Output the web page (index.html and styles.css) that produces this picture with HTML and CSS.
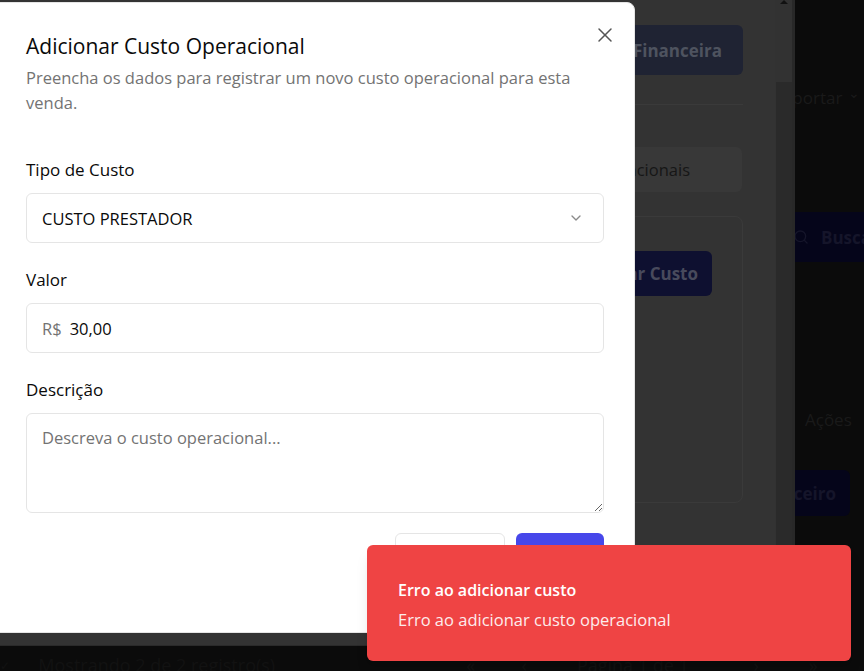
FILE: index.html
```html
<!DOCTYPE html>
<html lang="pt-BR">
<head>
<meta charset="utf-8">
<title>Adicionar Custo Operacional</title>
<link rel="stylesheet" href="styles.css">
</head>
<body>
  <!-- underlying page (behind both overlays) -->
  <div class="page">
    <div class="page-right">
      <div class="pr-export"><span>Exportar</span><span class="pr-chev">&#8964;</span></div>
      <div class="pr-search">
        <svg class="pr-ico" width="16" height="16" viewBox="0 0 24 24" fill="none" stroke="currentColor" stroke-width="2" stroke-linecap="round" stroke-linejoin="round"><circle cx="11" cy="11" r="8"/><path d="m21 21-4.3-4.3"/></svg>
        <span>Buscar</span>
      </div>
      <div class="pr-actions">Ações</div>
      <div class="pr-btn">Financeiro</div>
    </div>
    <div class="page-footer">
      <span class="pf-check">&#10003;</span>
      <span class="pf-count">Mostrando 2 de 2 registro(s)</span>
      <span class="pf-nav pf-first">&laquo;</span>
      <span class="pf-nav pf-prev">&lsaquo;</span>
      <span class="pf-page">Página 1 de 1</span>
      <span class="pf-nav pf-next">&rsaquo;</span>
      <span class="pf-nav pf-last">&raquo;</span>
    </div>
  </div>

  <!-- first (parent) dialog, dimmed -->
  <div class="sheet">
    <div class="sheet-body">
      <div class="sh-top"><div class="sh-btn">Conciliação Financeira</div></div>
      <div class="sh-sep"></div>
      <div class="sh-tabs"><div class="sh-tab">Custos Operacionais</div></div>
      <div class="sh-card">
        <div class="sh-card-btn">Adicionar Custo</div>
      </div>
    </div>
    <div class="sh-scroll">
      <span class="sh-arrow"></span>
      <div class="sh-thumb"></div>
    </div>
  </div>

  <!-- active dialog -->
  <div class="dialog" role="dialog">
    <button class="close" aria-label="Fechar">
      <svg width="24" height="24" viewBox="0 0 24 24" fill="none" stroke="currentColor" stroke-width="1.5" stroke-linecap="round" stroke-linejoin="round"><path d="M18 6 6 18"/><path d="m6 6 12 12"/></svg>
    </button>
    <div class="d-header">
      <h2 class="d-title">Adicionar Custo Operacional</h2>
      <p class="d-desc">Preencha os dados para registrar um novo custo operacional para esta venda.</p>
    </div>
    <div class="field first">
      <label class="f-label">Tipo de Custo</label>
      <div class="control select">
        <span>CUSTO PRESTADOR</span>
        <svg class="chev" width="16" height="16" viewBox="0 0 24 24" fill="none" stroke="currentColor" stroke-width="2" stroke-linecap="round" stroke-linejoin="round"><path d="m6 9 6 6 6-6"/></svg>
      </div>
    </div>
    <div class="field">
      <label class="f-label">Valor</label>
      <div class="control money"><span class="cur">R$</span><span>30,00</span></div>
    </div>
    <div class="field">
      <label class="f-label">Descrição</label>
      <textarea class="area" placeholder="Descreva o custo operacional..."></textarea>
    </div>
    <div class="d-footer">
      <button class="btn btn-outline">Cancelar</button>
      <button class="btn btn-primary">Salvar</button>
    </div>
  </div>

  <!-- toast -->
  <div class="toast" role="alert">
    <div class="t-title">Erro ao adicionar custo</div>
    <div class="t-desc">Erro ao adicionar custo operacional</div>
  </div>
</body>
</html>
```

FILE: styles.css
```css
* { box-sizing: border-box; }
html, body { margin: 0; padding: 0; }
body {
  width: 864px;
  height: 671px;
  overflow: hidden;
  position: relative;
  background: #0b0b0b;
  font-family: "Open Sans", "Noto Sans", sans-serif;
  color: #0a0a0a;
}

/* ---------- underlying page ---------- */
.page { position: relative; width: 864px; height: 671px; }
.page-right {
  margin-left: 795px;
  display: flex;
  flex-direction: column;
  padding-top: 86px;
  color: #1a1a1a;
  font-size: 17px;
}
.pr-export { display: flex; justify-content: space-between; margin-left: -21px; height: 24px; line-height: 24px; padding-right: 4px; }
.pr-chev { font-size: 14px; line-height: 14px; }
.pr-search {
  margin-top: 102px;
  height: 50px;
  width: 120px;
  margin-left: -18px;
  background: #05051a;
  border-radius: 6px;
  display: flex;
  align-items: center;
  gap: 12px;
  padding-left: 16px;
  font-weight: 700;
  color: #15152a;
}
.pr-ico { flex: none; }
.pr-actions { margin-top: 146px; margin-left: 10px; height: 24px; line-height: 24px; color: #1a1a1a; }
.pr-btn {
  margin-top: 38px;
  width: 120px;
  margin-left: -65px;
  height: 46px;
  background: #05051a;
  border-radius: 6px;
  display: flex;
  align-items: center;
  justify-content: flex-end;
  padding-right: 14px;
  font-weight: 700;
  color: #15152a;
  font-size: 17px;
}
.page-footer {
  position: absolute;
  left: 0; right: 0; bottom: -6px;
  height: 24px;
  display: flex;
  align-items: center;
  color: #121212;
  font-size: 18px;
}
.pf-check { width: 43px; font-size: 12px; }
.pf-count { width: 480px; }
.pf-nav { width: 62px; }
.pf-page { width: 198px; }

/* ---------- parent dialog (dimmed) ---------- */
.sheet {
  position: absolute;
  left: 0; top: 0;
  width: 795px;
  height: 646px;
  background: #333333;
  border-bottom: 1px solid #2a2a2a;
  display: flex;
}
.sheet-body {
  flex: 1;
  padding: 25px 32px 0 0;
  display: flex;
  flex-direction: column;
  align-items: flex-end;
}
.sh-top { display: flex; justify-content: flex-end; }
.sh-btn {
  height: 50px;
  padding: 0 21px 0 30px;
  background: #1f2333;
  border-radius: 6px;
  color: #4e535f;
  font-weight: 700;
  font-size: 17px;
  display: flex;
  align-items: center;
  white-space: nowrap;
}
.sh-sep { width: 300px; height: 1px; background: #3a3a3a; margin-top: 29px; }
.sh-tabs {
  margin-top: 42px;
  margin-right: 1px;
  height: 45px;
  background: #383838;
  border-radius: 6px;
  display: flex;
  align-items: center;
  padding: 0 52px 0 20px;
  color: #161616;
  font-size: 16.5px;
  font-weight: 500;
  white-space: nowrap;
}
.sh-card {
  margin-top: 24px;
  width: 300px;
  height: 287px;
  border: 1px solid #3a3a3a;
  border-radius: 8px;
  display: flex;
  flex-direction: column;
  align-items: flex-end;
  padding: 34px 30px 0 0;
}
.sh-card-btn {
  height: 45px;
  padding: 0 14px 0 30px;
  background: #0e1030;
  border-radius: 6px;
  display: flex;
  align-items: center;
  color: #484a5c;
  font-weight: 700;
  font-size: 17px;
  white-space: nowrap;
}
.sh-scroll {
  width: 20px;
  background: #323232;
  border-right: 3px solid #282828;
  position: relative;
}
.sh-arrow {
  position: absolute;
  left: 5px; top: 0;
  width: 0; height: 0;
  border-left: 4px solid transparent;
  border-right: 4px solid transparent;
  border-bottom: 4px solid #111;
}
.sh-thumb { margin-top: 82px; height: 563px; background: #2a2a2a; width: 16px; margin-left: 1px; }

/* ---------- active dialog ---------- */
.dialog {
  position: absolute;
  left: -10px;
  top: 2px;
  width: 645px;
  height: 631px;
  background: #ffffff;
  border: 1px solid #e5e5e5;
  border-radius: 0 8px 8px 0;
  padding: 29px 30px 0 35px;
}
.close {
  position: absolute;
  top: 20px; right: 17px;
  width: 24px; height: 24px;
  padding: 0;
  border: 0;
  background: transparent;
  color: #555555;
  display: flex; align-items: center; justify-content: center;
}
.d-header { display: flex; flex-direction: column; gap: 5px; }
.d-title {
  margin: 0;
  font-size: 21px;
  line-height: 28px;
  font-weight: 500;
  color: #0a0a0a;
}
.d-desc {
  margin: 0;
  font-size: 16.5px;
  line-height: 25px;
  color: #737373;
}
.field { display: flex; flex-direction: column; gap: 11px; margin-top: 25px; }
.field.first { margin-top: 43px; }
.f-label { font-size: 17px; line-height: 24px; font-weight: 500; color: #0a0a0a; }
.control {
  height: 50px;
  border: 1px solid #e5e5e5;
  border-radius: 6px;
  display: flex;
  align-items: center;
  padding: 0 15px;
  font-size: 16.5px;
  color: #0a0a0a;
}
.select { justify-content: space-between; }
.chev { color: #8a8a8a; margin-right: 4px; }
.money { gap: 8px; }
.cur { color: #737373; }
.area {
  height: 100px;
  border: 1px solid #e5e5e5;
  border-radius: 6px;
  padding: 12px 15px;
  font-family: inherit;
  font-size: 16.5px;
  line-height: 24px;
  resize: vertical;
  outline: none;
}
.area::placeholder { color: #737373; }
.d-footer { display: flex; justify-content: flex-end; gap: 11px; margin-top: 20px; }
.btn {
  height: 40px;
  border-radius: 6px;
  font-family: inherit;
  font-size: 16px;
  font-weight: 500;
  padding: 0 16px;
}
.btn-outline { width: 110px; background: #fff; border: 1px solid #e5e5e5; color: #0a0a0a; }
.btn-primary { width: 88px; background: #4747ea; border: 0; color: #fff; }

/* ---------- toast ---------- */
.toast {
  position: absolute;
  left: 367px;
  top: 545px;
  width: 484px;
  height: 116px;
  background: #ef4444;
  border-radius: 6px;
  box-shadow: 0 10px 15px -3px rgba(0,0,0,0.1), 0 4px 6px -4px rgba(0,0,0,0.1);
  padding: 34px 31px 0;
  color: #ffffff;
  display: flex;
  flex-direction: column;
  gap: 8px;
}
.t-title { font-size: 16px; line-height: 22px; font-weight: 600; }
.t-desc { font-size: 16.5px; line-height: 22px; opacity: 0.9; }
```
